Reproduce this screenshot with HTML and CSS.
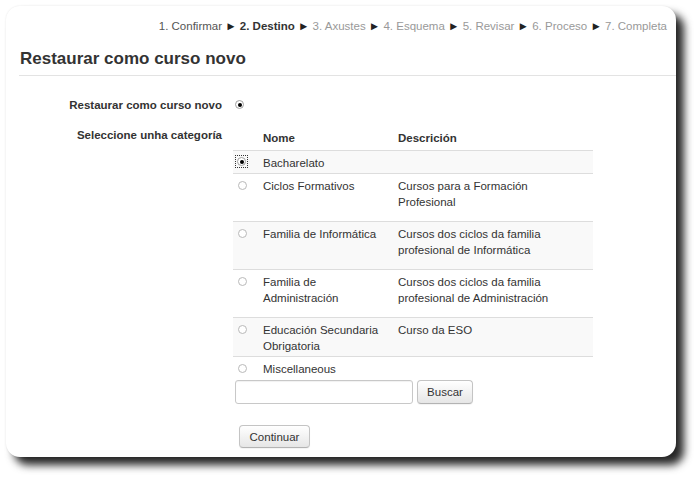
FILE: index.html
```html
<!DOCTYPE html>
<html>
<head>
<meta charset="utf-8">
<link rel="stylesheet" href="styles.css">
</head>
<body>
<div class="window">
  <div class="steps">1. Confirmar <span class="arr">►</span> <b class="cur">2. Destino</b> <span class="arr">►</span> <span class="todo">3. Axustes</span> <span class="arr">►</span> <span class="todo">4. Esquema</span> <span class="arr">►</span> <span class="todo">5. Revisar</span> <span class="arr">►</span> <span class="todo">6. Proceso</span> <span class="arr">►</span> <span class="todo">7. Completa</span></div>
  <h2 class="title">Restaurar como curso novo</h2>
  <div class="form">
    <div class="frow r1">
      <div class="flabel">Restaurar como curso novo</div>
      <div class="fcontent"><span class="radio on"></span></div>
    </div>
    <div class="frow r2">
      <div class="flabel pad">Seleccione unha categoría</div>
      <div class="fcontent">
        <table class="cats">
          <thead>
            <tr><th class="c-radio"></th><th class="c-name">Nome</th><th class="c-desc">Descrición</th></tr>
          </thead>
          <tbody>
            <tr class="odd"><td class="c-radio"><span class="focus"><span class="radio on"></span></span></td><td class="c-name">Bacharelato</td><td class="c-desc"></td></tr>
            <tr><td class="c-radio"><span class="radio"></span></td><td class="c-name">Ciclos Formativos</td><td class="c-desc"><p>Cursos para a Formación Profesional</p></td></tr>
            <tr class="odd"><td class="c-radio"><span class="radio"></span></td><td class="c-name">Familia de Informática</td><td class="c-desc"><p>Cursos dos ciclos da familia profesional de Informática</p></td></tr>
            <tr><td class="c-radio"><span class="radio"></span></td><td class="c-name">Familia de Administración</td><td class="c-desc"><p>Cursos dos ciclos da familia profesional de Administración</p></td></tr>
            <tr class="odd"><td class="c-radio"><span class="radio"></span></td><td class="c-name">Educación Secundaria Obrigatoria</td><td class="c-desc"><p>Curso da ESO</p></td></tr>
            <tr><td class="c-radio"><span class="radio"></span></td><td class="c-name">Miscellaneous</td><td class="c-desc"></td></tr>
          </tbody>
        </table>
        <div class="search"><input class="search-input" type="text"><button class="btn buscar">Buscar</button></div>
      </div>
    </div>
    <div class="actions"><button class="btn continuar">Continuar</button></div>
  </div>
</div>
</body>
</html>
```
FILE: styles.css
```css
html {
  margin: 0;
  padding: 0;
  background: #fff;
}
body {
  margin: 0;
  padding: 0;
  background: transparent;
  font-family: "Liberation Sans", Arial, sans-serif;
  font-size: 11.5px;
  line-height: 16px;
  color: #333;
  height: 481px;
  overflow: hidden;
}
.window {
  position: relative;
  margin: 6px 0 0 6px;
  width: 670px;
  height: 451px;
  background: #fff;
  border-radius: 14px;
  box-shadow: 0 0 2px rgba(0, 0, 0, 0.1);
}
.window::before {
  content: "";
  position: absolute;
  left: 8px;
  top: 8px;
  width: 670px;
  height: 451px;
  border-radius: 14px;
  background: #262626;
  filter: blur(4px);
  z-index: -1;
}
.steps {
  padding: 12px 9px 0 0;
  text-align: right;
  color: #555;
  white-space: nowrap;
}
.steps .arr { color: #222; }
.steps .cur { color: #333; font-weight: bold; }
.steps .todo { color: #999; }
.title {
  margin: 15px 0 0 13px;
  padding: 0 0 6px 1px;
  font-size: 17px;
  line-height: 20px;
  font-weight: bold;
  color: #333;
  border-bottom: 1px solid #e3e3e3;
}
.frow {
  display: flex;
  align-items: flex-start;
  gap: 11px;
}
.r1 { margin-top: 21px; }
.r2 { margin-top: 13px; }
.flabel {
  width: 216px;
  text-align: right;
  font-weight: bold;
  color: #333;
}
.flabel.pad { padding-top: 1px; }
.r1 .fcontent { padding-left: 2px; padding-top: 3px; }
.radio {
  display: block;
  width: 9px;
  height: 9px;
  box-sizing: border-box;
  border: 1px solid #b9b9b9;
  border-radius: 50%;
  background: #fff;
  position: relative;
}
.radio.on { border-color: #a0a0a0; }
.radio.on::after {
  content: "";
  position: absolute;
  left: 1.5px;
  top: 1.5px;
  width: 4px;
  height: 4px;
  border-radius: 50%;
  background: #000;
}
.focus {
  display: block;
  width: 9px;
  padding: 1px;
  margin: -2px 0 0 -2px;
  outline: 1px dotted #333;
  outline-offset: 0;
}
.cats {
  border-collapse: collapse;
  width: 360px;
}
.cats th {
  text-align: left;
  font-weight: bold;
  padding: 4px 8px 4px 8px;
  line-height: 16px;
  border-bottom: 1px solid #ddd;
}
.cats td {
  vertical-align: top;
  padding: 4px 8px 2px 8px;
  line-height: 16px;
}
.cats tbody tr { border-top: 1px solid #ddd; }
.cats tbody tr:first-child { border-top: 0; }
.cats tbody tr.odd { background: #f9f9f9; }
.cats .c-radio { width: 17px; padding-left: 5px; padding-right: 0; }
.cats td.c-radio { padding-top: 7px; }
.cats .c-name { width: 119px; }
.cats .c-desc p {
  margin: 0 0 9px 0;
  width: 162px;
}
.search {
  display: flex;
  gap: 4px;
  margin-left: 2px;
  margin-top: 1px;
}
.search-input {
  width: 178px;
  height: 24px;
  box-sizing: border-box;
  border: 1px solid #c8c8c8;
  border-radius: 3px;
  background: #fff;
  box-shadow: inset 0 1px 1px rgba(0, 0, 0, 0.06);
  padding: 0 4px;
  margin: 0;
}
.btn {
  font-family: "Liberation Sans", Arial, sans-serif;
  font-size: 11.5px;
  color: #333;
  background: linear-gradient(#ffffff, #e6e6e6);
  border: 1px solid #c4c4c4;
  border-bottom-color: #b3b3b3;
  border-radius: 4px;
  box-shadow: 0 1px 1px rgba(0, 0, 0, 0.05);
  margin: 0;
  padding: 0;
}
.buscar { width: 56px; height: 24px; }
.actions { margin: 21px 0 0 233px; }
.continuar { width: 71px; height: 23px; }
```
